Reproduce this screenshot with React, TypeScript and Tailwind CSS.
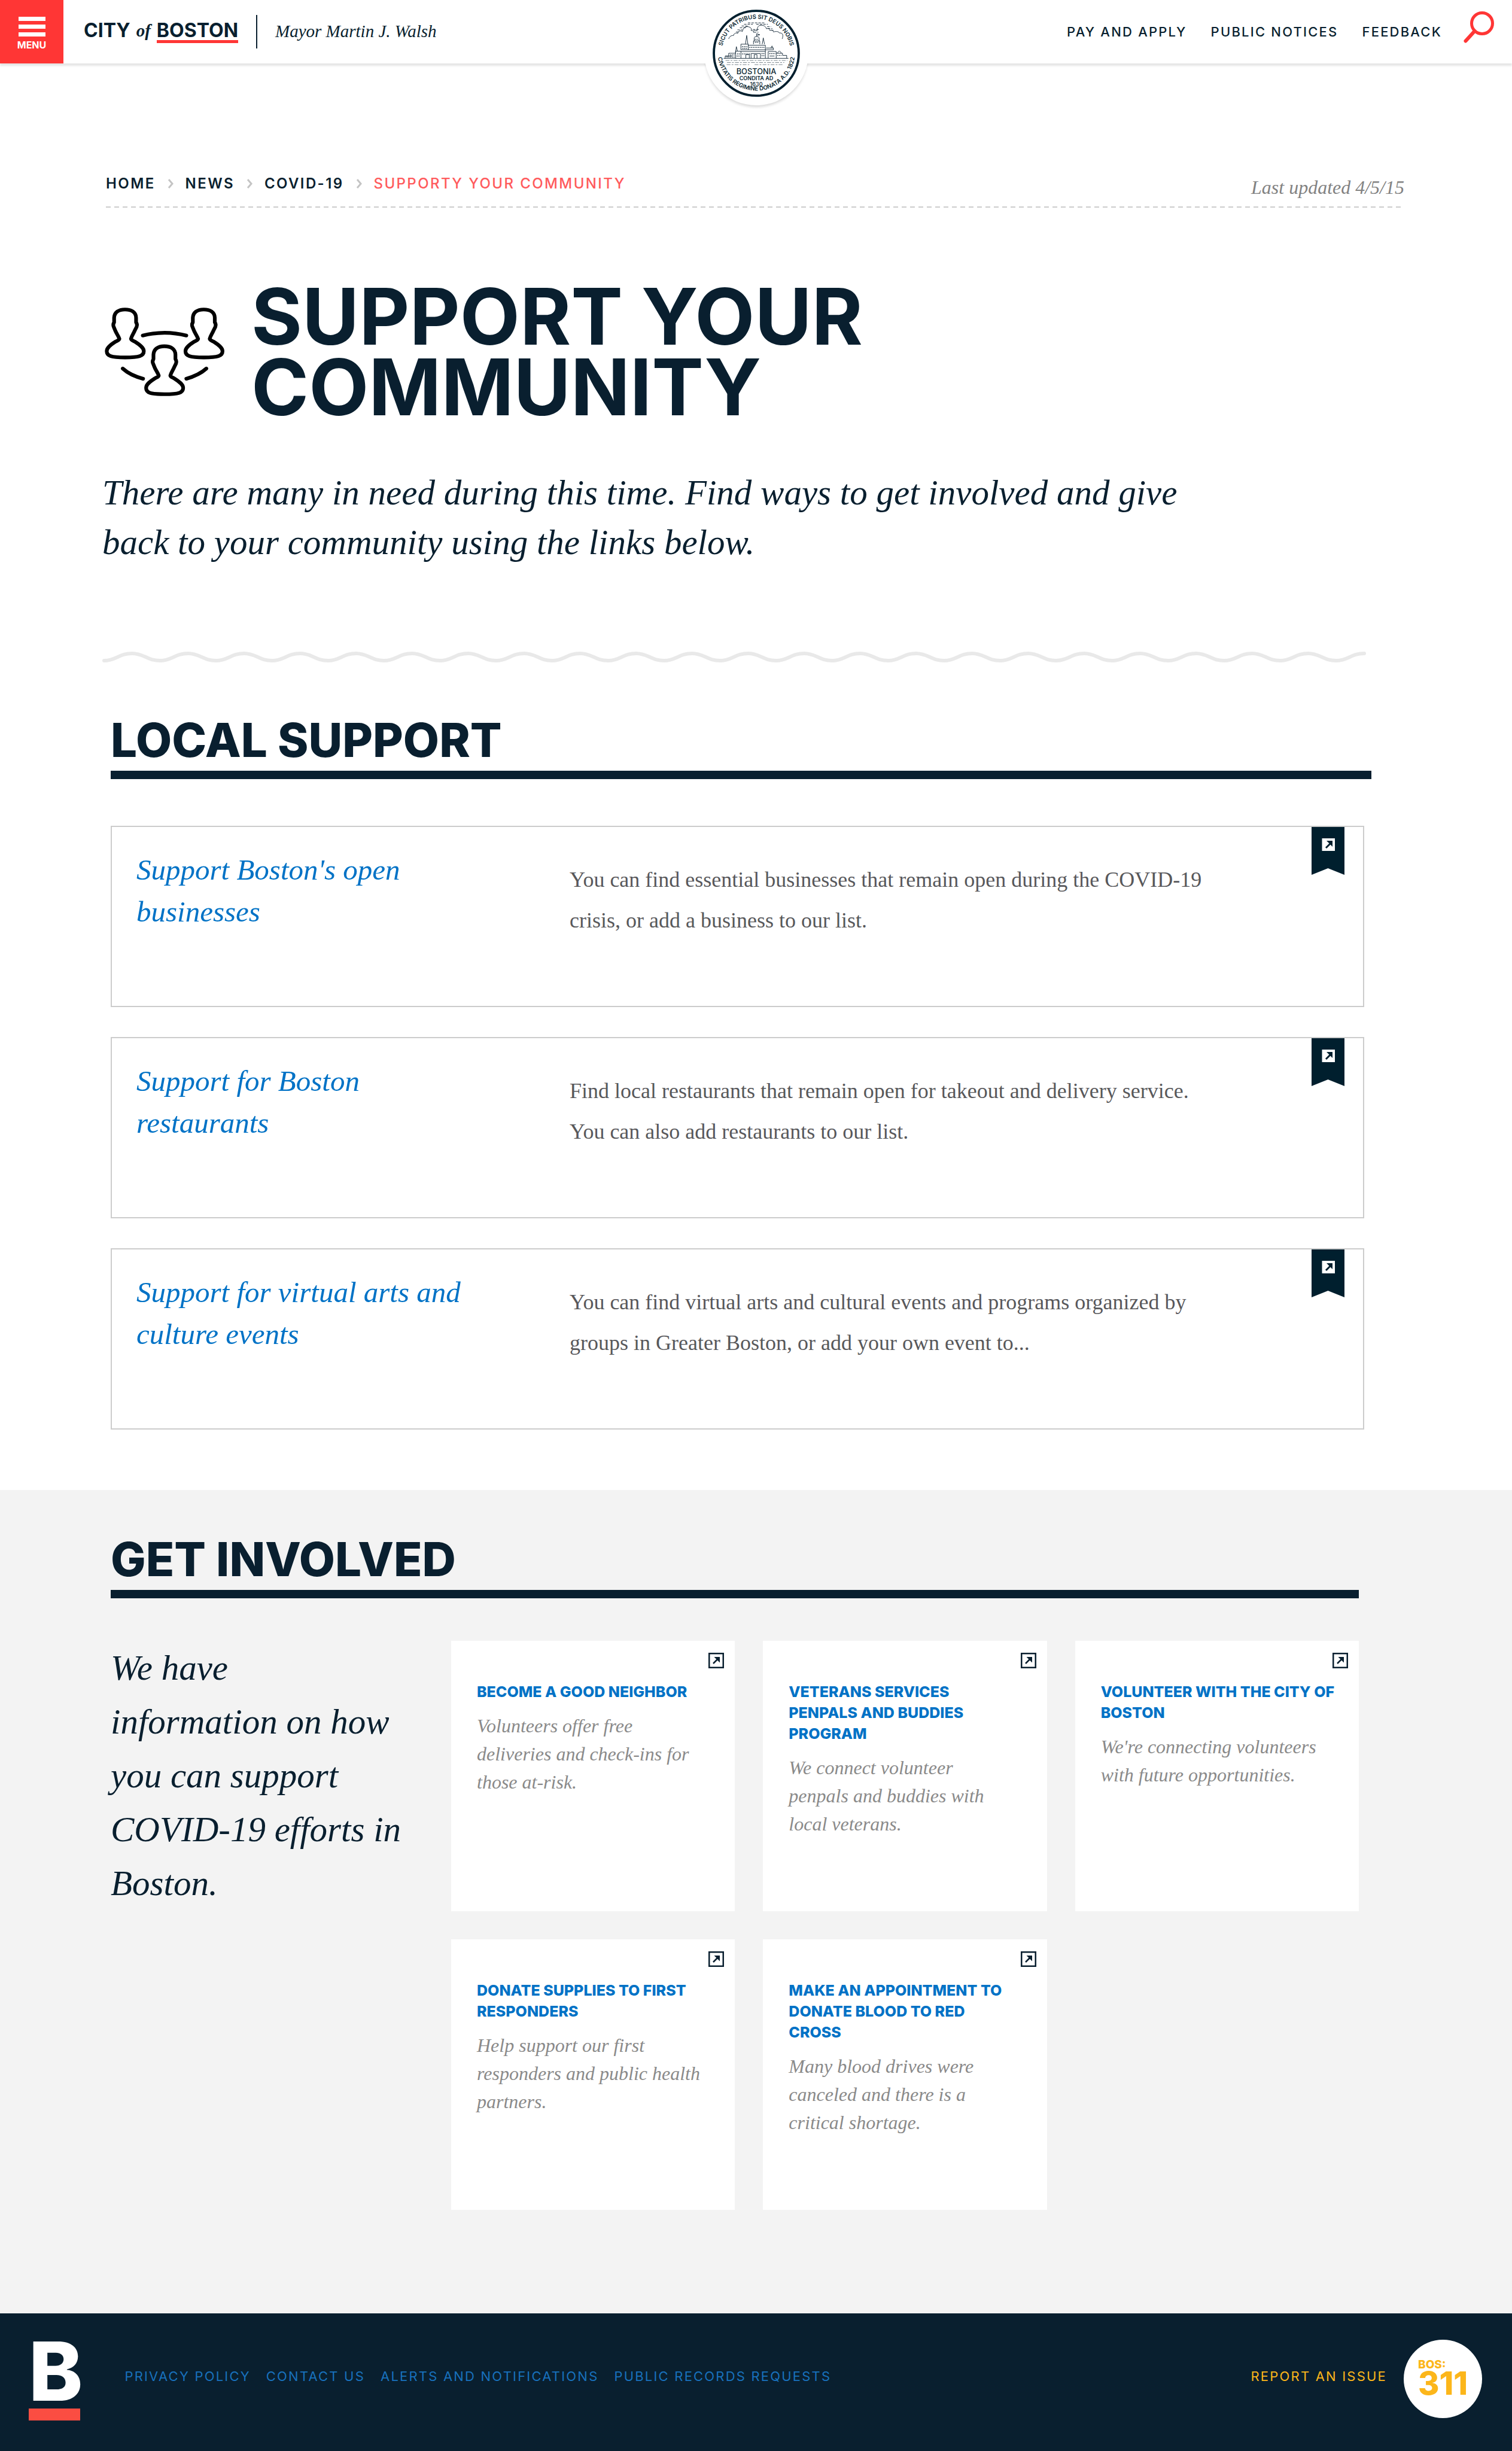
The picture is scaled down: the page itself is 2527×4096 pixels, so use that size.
import React from "react";

const SANS = "font-['Inter','Liberation_Sans',sans-serif]";
const SERIF = "font-['Liberation_Serif',serif]";

const navLinks = ["PAY AND APPLY", "PUBLIC NOTICES", "FEEDBACK"];
const crumbs = ["HOME", "NEWS", "COVID-19"];
const footerLinks = ["PRIVACY POLICY", "CONTACT US", "ALERTS AND NOTIFICATIONS", "PUBLIC RECORDS REQUESTS"];

const localSupport = [
  {
    title: "Support Boston's open businesses",
    text: "You can find essential businesses that remain open during the COVID-19 crisis, or add a business to our list.",
  },
  {
    title: "Support for Boston restaurants",
    text: "Find local restaurants that remain open for takeout and delivery service. You can also add restaurants to our list.",
  },
  {
    title: "Support for virtual arts and culture events",
    text: "You can find virtual arts and cultural events and programs organized by groups in Greater Boston, or add your own event to...",
  },
];

const involved = [
  { title: ["BECOME A GOOD NEIGHBOR"], text: "Volunteers offer free deliveries and check-ins for those at-risk." },
  { title: ["VETERANS SERVICES", "PENPALS AND BUDDIES", "PROGRAM"], text: "We connect volunteer penpals and buddies with local veterans." },
  { title: ["VOLUNTEER WITH THE CITY OF", "BOSTON"], text: "We're connecting volunteers with future opportunities." },
  { title: ["DONATE SUPPLIES TO FIRST", "RESPONDERS"], text: "Help support our first responders and public health partners." },
  { title: ["MAKE AN APPOINTMENT TO", "DONATE BLOOD TO RED", "CROSS"], text: "Many blood drives were canceled and there is a critical shortage." },
];

function Seal() {
  return (
    <svg viewBox="-250 -250 500 500" className="h-[146px] w-[146px]" role="img" aria-label="Seal of the City of Boston">
      <defs>
        <path id="sealTop" d="M-198 0 A198 198 0 0 1 198 0" />
        <path id="sealBottom" d="M-222 -8 A222 222 0 0 0 222 -8" />
      </defs>
      <circle r="243" fill="#fff" stroke="#001f2e" strokeWidth="13" />
      <g fill="#091f2f" textAnchor="middle" className="font-['Inter',sans-serif]">
        <text fontSize="33" fontWeight="600">
          <textPath href="#sealTop" startOffset="50%">SICUT PATRIBUS SIT DEUS NOBIS</textPath>
        </text>
        <text fontSize="33" fontWeight="600">
          <textPath href="#sealBottom" startOffset="50%">CIVITATIS REGIMINE DONATA A.D. 1822</textPath>
        </text>
        <text y="119" fontSize="44" fontWeight="500">BOSTONIA</text>
        <text y="153" fontSize="31" fontWeight="600">CONDITA AD</text>
        <text y="188" fontSize="31" fontWeight="500">1630</text>
      </g>
      <g fill="none" stroke="#091f2f" strokeWidth="3">
        <path d="M-158 -82c4-14 14-20 28-20 2-12 12-16 24-12 2-14 16-18 26-10 4-18 14-30 32-28 16 2 24 12 18 22 12-2 16 6 14 12" />
        <path d="M-16 -128c6-4 14-4 20 0 2-14 2-32 24-32 20 0 26 8 30 20 10-4 18 0 20 10 10-6 18-2 20 8 14-4 30-4 34 6 12-2 18 4 20 12 0 10-2 16-4 22" />
        <path d="M-48 -174H50M-70 -166H-20M0 -166H66M-84 -156H-44M62 -152H84M-94 -146H-60M66 -142H92M-108 -134H-80M84 -132H100M-116 -122H-98M-20 -136H18M-14 -120H12" strokeDasharray="14 6" />
        <path d="M-187 29H184M-178 29V16H-158V0H-118V29M-178 16H-138M-118 -12H-88V29M-118 -2V-14M-88 -20H60M-88 -20V-52H-46V-20M-46 -46H52V-20M-88 -10H52M-62 -52L-55 -102 -48 -52M-16 -52V-70H20V-52M-12 -70V-88C-10 -98 14 -98 16 -88V-70M2 -96V-112L20 -106 4 -102M34 -52L40 -88 47 -52M-120 0L-114 -38 -108 -12M60 -20H98V-30H56M84 -30L90 -42 95 -30M68 29V-10H114V29M52 -20V29M114 0H150V12H174V29M122 0C124 -16 140 -16 142 0M-30 29V2H24V29M-12 29V8H4V29M-60 29V8H-40V29M76 16H104" />
        <path d="M-82 -38H-50M-80 -28H-50M-40 -34H48M-110 4H-94M-112 16H-92M-82 4H-36M30 2H50M30 14H50M74 2H108M120 12H144M-150 10H-124M-170 22H-124M-8 -62H14M-8 -80H12" strokeDasharray="6 4" strokeWidth="4" />
        <path d="M-176 41H178M-168 53H160M-170 65H-40M-10 65H156" stroke="#6b7780" strokeDasharray="22 7 10 7" />
      </g>
    </svg>
  );
}

const PERSON =
  "M144 65C182 65 206 82 207 112V138C213 146 212 158 210 164L200 184C194 200 182 214 178 232C180 240 190 242 200 248C228 266 251 282 251 302C251 330 225 338 145 338C65 338 40 330 40 302C40 282 62 266 90 248C100 242 110 240 112 232C106 214 94 200 88 184L80 164C77 158 77 146 82 138V112C84 82 106 65 144 65Z";

function PeopleIcon() {
  return (
    <svg
      viewBox="29 54 680 504"
      className="h-[148px] w-[200px] shrink-0"
      fill="none"
      stroke="#000"
      strokeWidth="21"
      strokeLinecap="round"
      strokeLinejoin="round"
      aria-hidden="true"
    >
      <path d={PERSON} />
      <path d={PERSON} transform="translate(448 0)" />
      <path d={PERSON} transform="translate(224 209)" />
      <path d="M245 213C325 193 415 193 493 213" />
      <path d="M131 401C165 432 205 448 247 459" />
      <path d="M607 401C573 432 532 448 493 459" />
    </svg>
  );
}

function Wave() {
  let d = "M3 16";
  for (let i = 0; i < 45; i++) {
    const x = 3 + i * 47;
    const from = i % 2 === 0 ? 16 : 4;
    const to = i % 2 === 0 ? 4 : 16;
    d += `C${x + 20} ${from} ${x + 25} ${to} ${x + 47} ${to}`;
  }
  return (
    <svg viewBox="0 0 2121 20" preserveAspectRatio="none" className="block h-5 w-full" fill="none" aria-hidden="true">
      <path d={d} stroke="#e9e9e9" strokeWidth="6" strokeLinecap="round" />
    </svg>
  );
}

function Ribbon() {
  return (
    <svg viewBox="0 0 55 80" className="absolute top-0 right-[31px] h-20 w-[55px]" aria-hidden="true">
      <path d="M0 0H55V80L27.500 69L0 80Z" fill="#001f2e" />
      <rect x="17.500" y="19" width="21.500" height="21" fill="#fff" />
      <path d="M24 35L32 27" stroke="#001f2e" strokeWidth="3" />
      <path d="M25 23H35V33L31.500 29.500L28.500 26.500Z" fill="#001f2e" />
    </svg>
  );
}

function ExternalIcon() {
  return (
    <svg viewBox="0 0 26 26" className="absolute top-5 right-[18px] h-[26px] w-[26px]" aria-hidden="true">
      <rect x="1.250" y="1.250" width="23.500" height="23.500" fill="none" stroke="#091f2f" strokeWidth="2.500" />
      <path d="M8 18L15 11" stroke="#091f2f" strokeWidth="2.500" />
      <path d="M9.500 7H19V16.500L15.500 13L13 10.500Z" fill="#091f2f" />
    </svg>
  );
}

function Chevron() {
  return (
    <svg viewBox="0 0 10 16" className="h-4 w-[10px]" fill="none" stroke="#c4c4c4" strokeWidth="3" aria-hidden="true">
      <path d="M2 1L8 8L2 15" />
    </svg>
  );
}

function SectionHeading({ children }: { children: React.ReactNode }) {
  return (
    <h2 className={`${SANS} border-b-[14px] border-[#091f2f] pb-[11px] text-[78px] leading-[80px] font-extrabold text-[#091f2f]`}>
      {children}
    </h2>
  );
}

function Header() {
  return (
    <header className="relative flex h-[106px] items-center bg-white shadow-[0_4px_3px_rgba(0,0,0,0.1)]">
      <button className={`${SANS} flex h-[106px] w-[106px] flex-col items-center bg-[#ff3635] pt-7 text-white`}>
        <span className="flex w-[45px] flex-col gap-[6px]">
          <span className="h-[7px] bg-white" />
          <span className="h-[7px] bg-white" />
          <span className="h-[7px] bg-white" />
        </span>
        <span className="mt-1 text-[16px] leading-5 font-bold">MENU</span>
      </button>
      <a href="#" className={`${SANS} ml-[34px] flex items-start gap-[10px] text-[32px] leading-8 font-bold text-[#091f2f]`}>
        <span>CITY</span>
        <span className={`${SERIF} text-[29px] italic`}>of</span>
        <span className="border-b-[5px] border-[#ff3635]">BOSTON</span>
      </a>
      <span className="ml-[30px] h-14 w-[2px] bg-[#091f2f]" />
      <p className={`${SERIF} ml-[30px] text-[29px] text-[#091f2f] italic`}>Mayor Martin J. Walsh</p>
      <nav className={`${SANS} ml-auto flex items-center gap-10 text-[22px] font-medium tracking-widest text-[#091f2f]`}>
        {navLinks.map((l) => (
          <a key={l} href="#">{l}</a>
        ))}
      </nav>
      <button aria-label="Search" className="mt-[19px] mr-[30px] ml-9 self-start">
        <svg viewBox="0 0 51 53" className="h-[53px] w-[51px]" fill="none" stroke="#ff3635" aria-hidden="true">
          <circle cx="31" cy="20" r="17.500" strokeWidth="5" />
          <path d="M18.500 33L3.500 49.500" strokeWidth="6" strokeLinecap="round" />
        </svg>
      </button>
      <div className="absolute top-[2px] left-1/2 flex h-[174px] w-[174px] -translate-x-1/2 items-center justify-center rounded-full bg-white shadow-[0_4px_4px_-1px_rgba(0,0,0,0.15)]">
        <div className="absolute inset-x-[-10px] top-[-2px] h-[106px] bg-white" />
        <div className="relative">
          <Seal />
        </div>
      </div>
    </header>
  );
}

export default function App() {
  return (
    <div className="min-h-screen w-full bg-white">
      <Header />
      <main>
        <div className="mt-[185px] mr-[180px] ml-[177px] flex items-end justify-between bg-[repeating-linear-gradient(90deg,#cccccc_0_8px,transparent_8px_14px)] bg-[length:100%_2px] bg-bottom bg-no-repeat pb-[18px]">
          <nav aria-label="Breadcrumb" className={`${SANS} mb-[6px] flex items-center gap-5 text-[24px] leading-8 font-semibold tracking-widest text-[#091f2f]`}>
            {crumbs.map((c) => (
              <React.Fragment key={c}>
                <a href="#">{c}</a>
                <Chevron />
              </React.Fragment>
            ))}
            <span className="font-medium text-[#ff5a5c]">SUPPORTY YOUR COMMUNITY</span>
          </nav>
          <p className={`${SERIF} text-[32px] leading-8 text-[#828282] italic`}>Last updated 4/5/15</p>
        </div>

        <div className="mr-[244px] ml-[171px]">
          <div className="mt-[123px] flex items-center gap-[45px] pl-1">
            <PeopleIcon />
            <h1 className={`${SANS} max-w-[1200px] text-[130px] leading-[118px] font-bold text-[#091f2f]`}>SUPPORT YOUR COMMUNITY</h1>
          </div>
          <p className={`${SERIF} mt-[76px] max-w-[1860px] text-[59px] leading-[83px] text-[#091f2f] italic`}>
            There are many in need during this time. Find ways to get involved and give back to your community using the links below.
          </p>
          <div className="mt-[140px]">
            <Wave />
          </div>
        </div>

        <section className="mr-[247px] ml-[185px] pb-[101px]">
          <div className="-mr-3 mt-[89px]">
            <SectionHeading>LOCAL SUPPORT</SectionHeading>
          </div>
          <div className="mt-[78px] flex flex-col gap-[50px]">
            {localSupport.map((item) => (
              <article key={item.title} className="relative flex min-h-[303px] border-2 border-[#cccccc]">
                <div className="w-[765px] shrink-0 pt-[37px] pl-[41px]">
                  <h3 className={`${SERIF} max-w-[600px] text-[49px] leading-[70px] text-[#0072c6] italic`}>
                    <a href="#">{item.title}</a>
                  </h3>
                </div>
                <p className={`${SERIF} max-w-[1085px] pt-[54px] text-[36px] leading-[68px] text-[#58585b]`}>{item.text}</p>
                <Ribbon />
              </article>
            ))}
          </div>
        </section>

        <section className="bg-[#f3f3f3] pt-[76px] pr-[256px] pb-[173px] pl-[185px]">
          <SectionHeading>GET INVOLVED</SectionHeading>
          <div className="mt-[71px] flex">
            <p className={`${SERIF} w-[569px] shrink-0 pr-[66px] text-[59px] leading-[90px] text-[#091f2f] italic`}>
              We have
              <br />
              information on how you can support COVID-19 efforts in Boston.
            </p>
            <div className="grid flex-1 grid-cols-3 gap-[47px]">
              {involved.map((c) => (
                <article key={c.text} className="relative min-h-[452px] bg-white pt-[68px] pl-[43px]">
                  <ExternalIcon />
                  <h3 className={`${SANS} text-[25px] leading-[35px] font-extrabold text-[#0072c6]`}>
                    <a href="#">
                      {c.title.map((line) => (
                        <span key={line} className="block">{line}</span>
                      ))}
                    </a>
                  </h3>
                  <p className={`${SERIF} mt-4 pr-[53px] text-[32px] leading-[47px] text-[#8a8a8a] italic`}>{c.text}</p>
                </article>
              ))}
            </div>
          </div>
        </section>
      </main>

      <footer className={`${SANS} flex h-[230px] items-center bg-[#091f2f] pr-[50px] pb-3 pl-12`}>
        <a href="#" aria-label="Boston home" className="flex flex-col gap-[13px] pt-2">
          <span className="h-[99px] text-[136px] leading-[99px] font-extrabold text-white">B</span>
          <span className="h-5 w-[86px] bg-[#fb4d42]" />
        </a>
        <nav className="ml-[70px] flex gap-[26px] pb-2 text-[22px] tracking-widest text-[#1871bd]">
          {footerLinks.map((l) => (
            <a key={l} href="#">{l}</a>
          ))}
        </nav>
        <a href="#" className="ml-auto flex items-center gap-[28px] text-[#fcb61a]">
          <span className="pb-2 text-[22px] tracking-widest">REPORT AN ISSUE</span>
          <span className="flex h-[131px] w-[131px] flex-col justify-center rounded-full bg-white pl-6 font-extrabold">
            <span className="text-[19px] leading-4">BOS:</span>
            <span className="text-[54px] leading-[46px]">311</span>
          </span>
        </a>
      </footer>
    </div>
  );
}
